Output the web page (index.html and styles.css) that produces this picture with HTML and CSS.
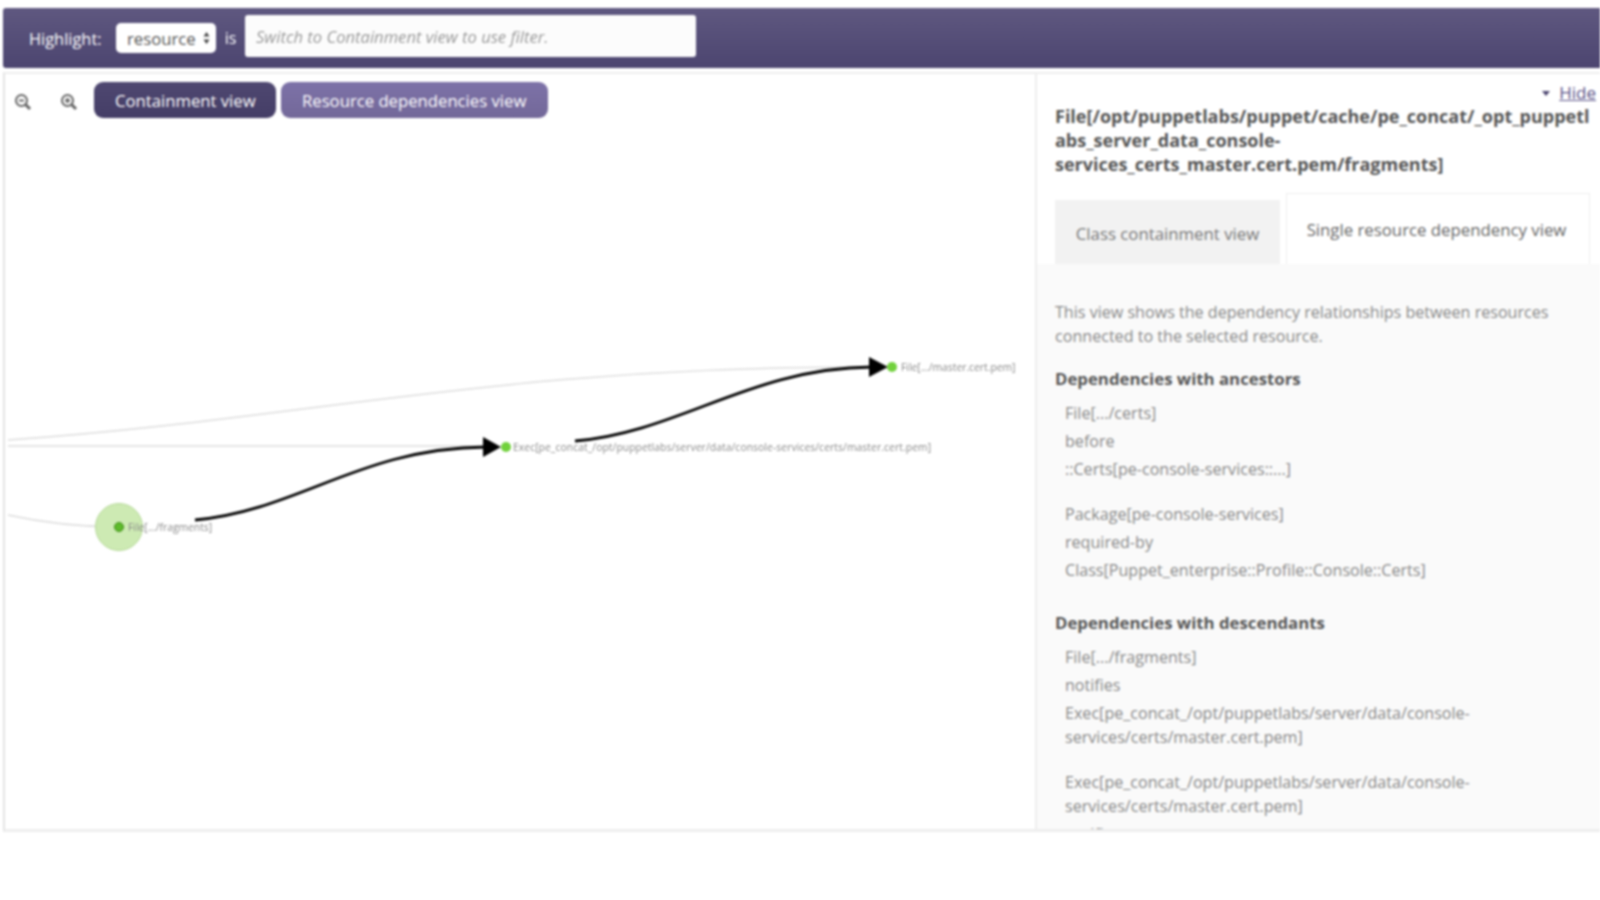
FILE: index.html
```html
<!DOCTYPE html>
<html lang="en">
  <head>
    <meta charset="UTF-8" />
    <title>Node graph</title>
    <link rel="stylesheet" href="styles.css">
  </head>
  <body>
    <div class="page">
      <div class="toolbar">
        <label class="highlight-label">Highlight:</label>
        <div class="select-box">
          <span>resource</span>
          <svg class="select-arrows" width="7" height="14" viewBox="0 0 7 14">
            <path d="M3.5 1 L6.5 5.5 H0.5 Z M3.5 13 L6.5 8.5 H0.5 Z" fill="#444" />
          </svg>
        </div>
        <span class="is-label">is</span>
        <div class="filter-input">Switch to Containment view to use filter.</div>
      </div>

      <div class="main">
        <div class="graph">
          <svg class="graph-canvas" width="1033" height="760" viewBox="3 72 1033 760">
            <!-- faint links -->
            <path class="link" d="M8 440 C 300 420, 500 366, 870 367" />
            <path class="link" d="M8 446 H 490" />
            <path class="link" d="M8 515 C 40 522, 80 527, 119 527" />
            <!-- dependency links -->
            <path class="dep" d="M195 520 C 300 510, 360 448, 486 447" />
            <path class="dep" d="M575 441 C 680 432, 750 368, 872 367" />
            <path class="arrow" d="M483 437 L501 447 L483 457 Z" />
            <path class="arrow" d="M869 357 L888 367 L869 377 Z" />
            <!-- nodes -->
            <circle class="halo" cx="119" cy="527" r="23.5" />
            <circle class="node selected" cx="119" cy="527" r="4.5" />
            <circle class="node" cx="506" cy="447" r="5" />
            <circle class="node" cx="892" cy="367" r="5" />
            <text class="node-label" x="128" y="531">File[.../fragments]</text>
            <text class="node-label" x="513" y="451" textLength="418">Exec[pe_concat_/opt/puppetlabs/server/data/console-services/certs/master.cert.pem]</text>
            <text class="node-label" x="901" y="371">File[.../master.cert.pem]</text>
          </svg>

          <div class="graph-controls">
            <svg class="zoom-icon" width="18" height="18" viewBox="0 0 18 18">
              <circle cx="7.5" cy="7.5" r="5.5" />
              <path d="M11.5 11.5 L16 16" class="handle" />
              <path d="M5 7.5 H10" />
            </svg>
            <svg class="zoom-icon" width="18" height="18" viewBox="0 0 18 18">
              <circle cx="7.5" cy="7.5" r="5.5" />
              <path d="M11.5 11.5 L16 16" class="handle" />
              <path d="M5 7.5 H10 M7.5 5 V10" />
            </svg>
            <a class="view-btn dark" href="#">Containment view</a>
            <a class="view-btn light" href="#">Resource dependencies view</a>
          </div>
        </div>

        <div class="side">
          <div class="hide-row"><span class="hide-caret"></span><a href="#">Hide</a></div>
          <h2 class="res-title">File[/opt/puppetlabs/puppet/cache/pe_concat/_opt_puppetlabs_server_data_console-services_certs_master.cert.pem/fragments]</h2>
          <div class="tabs">
            <div class="tab">Class containment view</div>
            <div class="tab active">Single resource dependency view</div>
          </div>
          <div class="tab-body">
            <p class="desc">This view shows the dependency relationships between resources connected to the selected resource.</p>

            <h3>Dependencies with ancestors</h3>
            <div class="dep-item">
              <p>File[.../certs]</p>
              <p>before</p>
              <p>::Certs[pe-console-services::...]</p>
            </div>
            <div class="dep-item">
              <p>Package[pe-console-services]</p>
              <p>required-by</p>
              <p>Class[Puppet_enterprise::Profile::Console::Certs]</p>
            </div>

            <h3>Dependencies with descendants</h3>
            <div class="dep-item">
              <p>File[.../fragments]</p>
              <p>notifies</p>
              <p>Exec[pe_concat_/opt/puppetlabs/server/data/console-services/certs/master.cert.pem]</p>
            </div>
            <div class="dep-item">
              <p>Exec[pe_concat_/opt/puppetlabs/server/data/console-services/certs/master.cert.pem]</p>
              <p>notifies</p>
            </div>
          </div>
        </div>
      </div>
    </div>
  </body>
</html>
```

FILE: styles.css
```css
* {
  box-sizing: border-box;
  margin: 0;
  padding: 0;
}

html,
body {
  height: 100%;
  overflow: hidden;
  background: #fff;
}

body {
  font-family: "Open Sans", "Noto Sans", sans-serif;
  font-size: 16px;
  color: #666;
}

/* the source screenshot is upscaled, so everything is soft */
.page {
  height: 824px;
  margin-top: 8px;
  margin-left: 3px;
  display: flex;
  flex-direction: column;
  gap: 4px;
  filter: blur(0.8px);
}

.toolbar {
  height: 60px;
  flex: none;
  display: flex;
  align-items: center;
  padding-left: 26px;
  background: linear-gradient(#5f5880, #4c4570);
  border-radius: 3px 0 0 3px;
  color: #fff;
}

.highlight-label {
  font-size: 16.4px;
  width: 87px;
}

.select-box {
  width: 100px;
  height: 30px;
  display: flex;
  align-items: center;
  justify-content: space-between;
  padding: 0 6px 0 11px;
  background: #fff;
  border-radius: 5px;
  color: #555;
  font-size: 16.7px;
}

.is-label {
  width: 29px;
  text-align: center;
  font-size: 16px;
}

.filter-input {
  width: 451px;
  height: 42px;
  margin-top: -4px;
  display: flex;
  align-items: center;
  padding-left: 11px;
  background: #fcfcfc;
  border-radius: 3px;
  color: #999;
  font-size: 16.6px;
  font-style: italic;
}

.main {
  flex: 1;
  min-height: 0;
  display: flex;
  border-top: 2px solid #eee;
  border-left: 2px solid #e4e4e4;
  border-bottom: 3px solid #eee;
  overflow: hidden;
}

.graph {
  position: relative;
  width: 1032px;
  flex: none;
  border-right: 2px solid #eee;
}

.graph-canvas {
  position: absolute;
  top: -2px;
  left: -2px;
}

.graph-controls {
  position: relative;
  display: flex;
  align-items: center;
  padding: 8px 0 0 9px;
}

.zoom-icon {
  fill: none;
  stroke: #666;
  stroke-width: 2;
  margin-top: 3px;
  margin-right: 28px;
}

.zoom-icon .handle {
  stroke-width: 3;
}

.zoom-icon + .zoom-icon {
  margin-right: 16px;
}

.view-btn {
  height: 36px;
  display: flex;
  align-items: center;
  padding: 0 0 0 21px;
  border-radius: 9px;
  color: #fff;
  text-decoration: none;
  font-size: 16.7px;
  white-space: nowrap;
}

.view-btn.dark {
  width: 182px;
  background: linear-gradient(#4f4871, #443d66);
  margin-right: 5px;
}

.view-btn.light {
  width: 267px;
  background: linear-gradient(#7d72a8, #736899);
}

.link {
  fill: none;
  stroke: #ddd;
  stroke-width: 1.4;
}

.dep {
  fill: none;
  stroke: #000;
  stroke-width: 2.8;
}

.arrow {
  fill: #000;
}

.halo {
  fill: #cdeab3;
  stroke: #b5d898;
}

.node {
  fill: #71d13c;
}

.node.selected {
  fill: #5dbb2a;
  stroke: #3f8a1a;
}

.node-label {
  font-size: 10.3px;
  fill: #888;
}

.side {
  flex: 1;
  min-width: 0;
  background: #fff;
  padding-left: 18px;
  padding-right: 4px;
}

.hide-row {
  height: 29px;
  display: flex;
  justify-content: flex-end;
  align-items: flex-end;
  font-size: 17px;
  line-height: 20px;
}

.hide-row a {
  color: #5a5288;
}

.hide-caret {
  width: 0;
  height: 0;
  margin: 0 9px 7px 0;
  border-left: 4px solid transparent;
  border-right: 4px solid transparent;
  border-top: 5px solid #4c4570;
}

.res-title {
  font-size: 18px;
  line-height: 24px;
  font-weight: 700;
  color: #555;
  overflow-wrap: anywhere;
  width: 537px;
  margin-top: 1px;
}

.tabs {
  display: flex;
  align-items: flex-end;
  gap: 6px;
  margin-top: 17px;
}

.tab {
  width: 225px;
  height: 64px;
  display: flex;
  align-items: center;
  justify-content: center;
  padding-top: 3px;
  background: #f2f2f2;
  font-size: 16.8px;
  color: #777;
}

.tab.active {
  width: 304px;
  height: 71px;
  padding: 1px 3px 0 0;
  background: #fff;
  border: 1px solid #eee;
  border-bottom: 0;
  color: #666;
}

.tab-body {
  margin-left: -18px;
  margin-right: -4px;
  padding: 36px 18px 0;
  background: #fafafa;
  height: 600px;
}

.desc {
  width: 510px;
  font-size: 16.1px;
  line-height: 24px;
  color: #888;
}

h3 {
  font-size: 16.8px;
  line-height: 24px;
  font-weight: 700;
  color: #555;
  margin-top: 19px;
}

.dep-item + h3 {
  margin-top: 29px;
}

.dep-item {
  padding: 10px 0 0 10px;
  margin-bottom: 11px;
  width: 430px;
  font-size: 16.1px;
  color: #888;
}

.dep-item p {
  line-height: 24px;
  margin-bottom: 4px;
}
```
